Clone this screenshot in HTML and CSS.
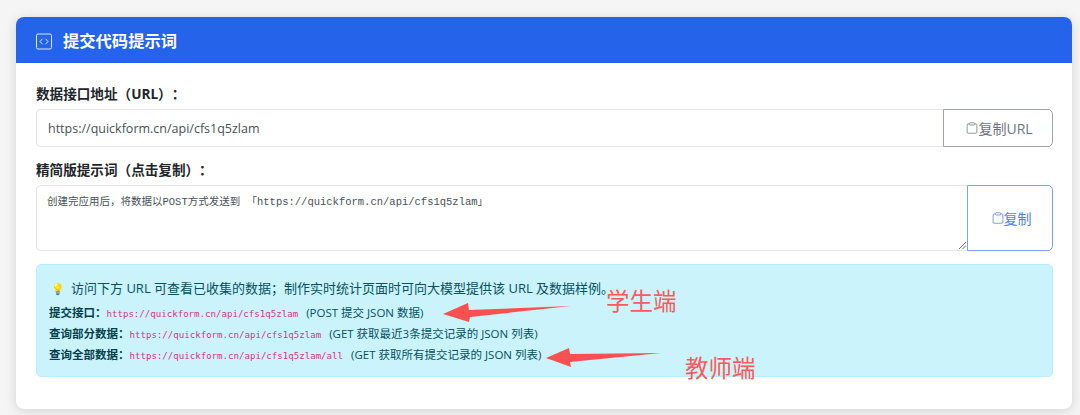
FILE: index.html
```html
<!DOCTYPE html>
<html lang="zh">
<head>
<meta charset="utf-8">
<title>提交代码提示词</title>
<link rel="stylesheet" href="styles.css">
</head>
<body>
<section class="card">
  <header class="card-head">
    <svg class="head-icon" viewBox="0 0 16 16" fill="none" stroke="currentColor"><rect x="0.5" y="0.5" width="15" height="15" rx="1.5"/><path d="M6.5 5.3 4 8l2.500 2.700M9.500 5.300 12 8l-2.500 2.700"/></svg>
    <h2>提交代码提示词</h2>
  </header>
  <div class="card-body">
    <label class="label">数据接口地址（URL）：</label>
    <div class="group url-group">
      <div class="field url-field">https://quickform.cn/api/cfs1q5zlam</div>
      <button class="btn btn-gray">
        <svg class="clip" viewBox="0 0 16 16" fill="none" stroke="currentColor"><path d="M4.500 2.500H3a1.500 1.500 0 0 0-1.500 1.500v9.500A1.500 1.500 0 0 0 3 15h10a1.500 1.500 0 0 0 1.500-1.500V4A1.500 1.500 0 0 0 13 2.500h-1.500"/><rect x="4.500" y="1" width="7" height="3" rx="1"/></svg><span>复制URL</span>
      </button>
    </div>
    <label class="label second">精简版提示词（点击复制）：</label>
    <div class="group prompt-group">
      <div class="field prompt-field">创建完应用后，将数据以POST方式发送到 「https://quickform.cn/api/cfs1q5zlam」
        <svg class="grip" viewBox="0 0 8 8" stroke="#555" fill="none"><path d="M0 8 8 0M4 8l4-4"/></svg>
      </div>
      <button class="btn btn-blue">
        <svg class="clip" viewBox="0 0 16 16" fill="none" stroke="currentColor"><path d="M4.500 2.500H3a1.500 1.500 0 0 0-1.500 1.500v9.500A1.500 1.500 0 0 0 3 15h10a1.500 1.500 0 0 0 1.500-1.500V4A1.500 1.500 0 0 0 13 2.500h-1.500"/><rect x="4.500" y="1" width="7" height="3" rx="1"/></svg><span>复制</span>
      </button>
    </div>
    <div class="alert">
      <p class="alert-lead"><span class="bulb">💡</span>访问下方 URL 可查看已收集的数据；制作实时统计页面时可向大模型提供该 URL 及数据样例。</p>
      <p class="row"><strong>提交接口：</strong><code>https://quickform.cn/api/cfs1q5zlam</code><span class="note">(POST 提交 JSON 数据)</span></p>
      <p class="row"><strong>查询部分数据：</strong><code>https://quickform.cn/api/cfs1q5zlam</code><span class="note">(GET 获取最近3条提交记录的 JSON 列表)</span></p>
      <p class="row"><strong>查询全部数据：</strong><code>https://quickform.cn/api/cfs1q5zlam/all</code><span class="note">(GET 获取所有提交记录的 JSON 列表)</span></p>
    </div>
  </div>
</section>
<svg class="arrow arrow-one" viewBox="0 0 128 22"><path fill="#fb5050" d="M0 11 25 0l1 7 102-4-101 11-1 5z"/></svg>
<svg class="arrow arrow-two" viewBox="0 0 115 20"><path fill="#fb5050" d="M0 10 23 0l1 6 91-1-91 9 1 5z"/></svg>
<span class="mark mark-one">学生端</span>
<span class="mark mark-two">教师端</span>
</body>
</html>
```
FILE: styles.css
```css
* { box-sizing: border-box; }
html, body { height: 100%; }
body {
  margin: 0;
  padding: 17px 8px 0 16px;
  overflow: hidden;
  position: relative;
  background: #f5f5f5;
  font-family: "Open Sans", "Noto Sans CJK SC", sans-serif;
  color: #212529;
}
.card {
  height: 392px;
  background: #fff;
  border-radius: 8px;
  box-shadow: 0 2px 12px rgba(0, 0, 0, .14);
  overflow: hidden;
}
.card-head {
  height: 46px;
  padding: 3px 20px 0;
  display: flex;
  align-items: center;
  gap: 11px;
  background: #2563eb;
  color: #fff;
}
.head-icon { width: 16px; height: 17px; opacity: .85; }
.card-head h2 {
  margin: 0;
  font-size: 16.300px;
  font-weight: 700;
  line-height: 1;
}
.card-body { padding: 22px 19px 0 20px; }
.label {
  display: block;
  font-size: 13.600px;
  font-weight: 700;
  line-height: 18px;
  margin-bottom: 6px;
  text-spacing-trim: space-all;
}
.label.second { margin: 14px 0 6px; }
.group { display: flex; }
.field {
  flex: 1;
  position: relative;
  border: 1px solid #e5e7eb;
  border-right: 0;
  border-radius: 5px 0 0 5px;
  color: #495057;
}
.url-group { height: 38px; }
.url-field {
  padding: 0 11px;
  font-size: 12.500px;
  line-height: 38px;
}
.prompt-group { height: 66px; }
.prompt-field {
  padding: 9px 10px;
  font-family: "Liberation Mono", "Noto Sans CJK SC", monospace;
  font-size: 10.500px;
  line-height: 14px;
}
.grip {
  position: absolute;
  right: 1px;
  bottom: 1px;
  width: 7px;
  height: 7px;
}
.btn {
  display: flex;
  align-items: center;
  justify-content: center;
  padding: 0 0 0 3px;
  background: #fff;
  font-family: inherit;
  font-size: 14px;
  border: 1px solid;
  border-radius: 0 5px 5px 0;
}
.btn-gray { width: 110px; color: #6c757d; border-color: #9ca3af; }
.btn-blue { width: 86px; color: #4f7fee; border-color: #7ba0f3; }
.clip { width: 12px; height: 14px; flex: none; }
.alert {
  margin-top: 13px;
  height: 113px;
  padding: 13px 12px;
  background: #cbf3fb;
  border: 1px solid #b6effb;
  border-radius: 5px;
  color: #055160;
}
.alert p { margin: 0; }
.alert-lead { font-size: 13px; line-height: 20px; margin-bottom: 4px !important; padding-left: 2px; }
.bulb { display: inline-block; width: 20px; font-size: 11px; }
.row { font-size: 11.500px; height: 21px; line-height: 20px; white-space: nowrap; overflow: hidden; }
.row strong { font-weight: 700; color: #04414d; }
.row code {
  font-family: "DejaVu Sans Mono", monospace;
  font-size: 9.100px;
  color: #d63384;
}
.note { margin-left: 8px; }
.arrow { position: absolute; }
.arrow-one { left: 443px; top: 303px; width: 128px; height: 22px; }
.arrow-two { left: 546px; top: 348px; width: 115px; height: 20px; }
.mark {
  position: absolute;
  font-family: "Noto Sans CJK SC", sans-serif;
  font-size: 23.500px;
  line-height: 30px;
  color: #fb5a5a;
}
.mark-one { left: 606px; top: 285px; }
.mark-two { left: 685px; top: 352px; }
```
